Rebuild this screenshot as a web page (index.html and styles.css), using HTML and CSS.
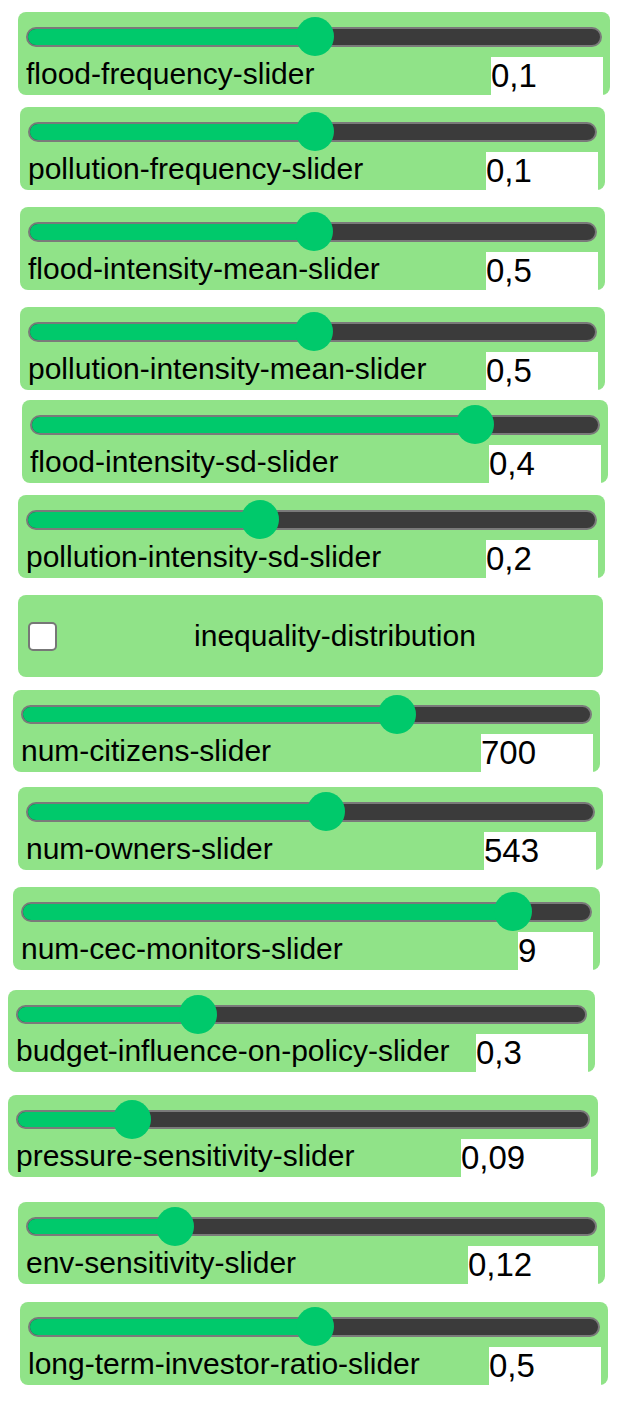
FILE: index.html
```html
<!doctype html>
<html lang="en">
<head>
    <meta charset="utf-8">
    <title>Model controls</title>
    <link rel="stylesheet" href="styles.css">
</head>
<body>
    <div class="controls">
        <div class="widget slider w-flood-frequency">
            <div class="track" style="--pos: 50.2%"><span class="fill"></span><span class="thumb"></span></div>
            <div class="row"><span class="label">flood-frequency-slider</span><span class="value">0,1</span></div>
        </div>

        <div class="widget slider w-pollution-frequency">
            <div class="track" style="--pos: 50.5%"><span class="fill"></span><span class="thumb"></span></div>
            <div class="row"><span class="label">pollution-frequency-slider</span><span class="value">0,1</span></div>
        </div>

        <div class="widget slider w-flood-mean">
            <div class="track" style="--pos: 50.3%"><span class="fill"></span><span class="thumb"></span></div>
            <div class="row"><span class="label">flood-intensity-mean-slider</span><span class="value">0,5</span></div>
        </div>

        <div class="widget slider w-pollution-mean">
            <div class="track" style="--pos: 50.3%"><span class="fill"></span><span class="thumb"></span></div>
            <div class="row"><span class="label">pollution-intensity-mean-slider</span><span class="value">0,5</span></div>
        </div>

        <div class="widget slider w-flood-sd">
            <div class="track" style="--pos: 78.2%"><span class="fill"></span><span class="thumb"></span></div>
            <div class="row"><span class="label">flood-intensity-sd-slider</span><span class="value">0,4</span></div>
        </div>

        <div class="widget slider w-pollution-sd">
            <div class="track" style="--pos: 41%"><span class="fill"></span><span class="thumb"></span></div>
            <div class="row"><span class="label">pollution-intensity-sd-slider</span><span class="value">0,2</span></div>
        </div>

        <label class="widget switch w-inequality">
            <span class="box"></span>
            <span class="label">inequality-distribution</span>
        </label>

        <div class="widget slider w-citizens">
            <div class="track" style="--pos: 66%"><span class="fill"></span><span class="thumb"></span></div>
            <div class="row"><span class="label">num-citizens-slider</span><span class="value">700</span></div>
        </div>

        <div class="widget slider w-owners">
            <div class="track" style="--pos: 52.7%"><span class="fill"></span><span class="thumb"></span></div>
            <div class="row"><span class="label">num-owners-slider</span><span class="value">543</span></div>
        </div>

        <div class="widget slider w-monitors">
            <div class="track" style="--pos: 86.5%"><span class="fill"></span><span class="thumb"></span></div>
            <div class="row"><span class="label">num-cec-monitors-slider</span><span class="value narrow">9</span></div>
        </div>

        <div class="widget slider w-budget">
            <div class="track" style="--pos: 31.7%"><span class="fill"></span><span class="thumb"></span></div>
            <div class="row"><span class="label">budget-influence-on-policy-slider</span><span class="value">0,3</span></div>
        </div>

        <div class="widget slider w-pressure">
            <div class="track" style="--pos: 20%"><span class="fill"></span><span class="thumb"></span></div>
            <div class="row"><span class="label">pressure-sensitivity-slider</span><span class="value wide">0,09</span></div>
        </div>

        <div class="widget slider w-env">
            <div class="track" style="--pos: 25.9%"><span class="fill"></span><span class="thumb"></span></div>
            <div class="row"><span class="label">env-sensitivity-slider</span><span class="value wide">0,12</span></div>
        </div>

        <div class="widget slider w-investors">
            <div class="track" style="--pos: 50.2%"><span class="fill"></span><span class="thumb"></span></div>
            <div class="row"><span class="label">long-term-investor-ratio-slider</span><span class="value">0,5</span></div>
        </div>
    </div>
</body>
</html>
```

FILE: styles.css
```css
body {
    margin: 0;
    background-color: #ffffff;
    font-family: 'Liberation Sans', Arial, sans-serif;
    color: #000000;
}

.controls {
    display: flex;
    flex-direction: column;
    align-items: flex-start;
}

.widget {
    box-sizing: border-box;
    background-color: #90e388;
    border-radius: 8px;
}

/* sliders */

.slider {
    display: flex;
    flex-direction: column;
    height: 83px;
    padding: 15px 7px 0 8px;
}

.track {
    position: relative;
    box-sizing: border-box;
    height: 20px;
    margin-right: 1px;
    border: 2px solid #7a7a7a;
    border-radius: 10px;
    background-color: #3b3b3b;
}

.track .fill {
    display: block;
    width: var(--pos);
    height: 100%;
    border-radius: 8px 0 0 8px;
    background-color: #00c96b;
}

.track .thumb {
    position: absolute;
    top: 50%;
    left: calc(var(--pos) - 19px);
    width: 38px;
    height: 39px;
    margin-top: -20px;
    border-radius: 50%;
    background-color: #00c96b;
}

.row {
    display: flex;
    height: 38px;
    margin-top: 10px;
}

.row .label {
    flex: 1;
    font-size: 30px;
    line-height: 34px;
    white-space: nowrap;
}

.value {
    width: 112px;
    background-color: #ffffff;
    font-size: 33px;
    line-height: 38px;
}

.value.wide {
    width: 130px;
}

.value.narrow {
    width: 75px;
}

/* switch */

.switch {
    display: flex;
    align-items: center;
    height: 82px;
    padding: 0 10px;
}

.switch .box {
    box-sizing: border-box;
    width: 29px;
    height: 29px;
    border: 2px solid #777777;
    border-radius: 5px;
    background-color: #ffffff;
}

.switch .label {
    flex: 1;
    margin-left: 20px;
    font-size: 30px;
    text-align: center;
}

/* placement of each widget */

.w-flood-frequency { margin: 12px 0 0 18px; width: 592px; }
.w-pollution-frequency { margin: 12px 0 0 20px; width: 585px; }
.w-flood-mean { margin: 17px 0 0 20px; width: 585px; }
.w-pollution-mean { margin: 17px 0 0 20px; width: 585px; }
.w-flood-sd { margin: 10px 0 0 22px; width: 586px; }
.w-pollution-sd { margin: 12px 0 0 18px; width: 587px; }
.w-inequality { margin: 17px 0 0 18px; width: 585px; }
.w-citizens { margin: 13px 0 0 13px; width: 587px; height: 82px; }
.w-owners { margin: 15px 0 0 18px; width: 585px; }
.w-monitors { margin: 17px 0 0 13px; width: 587px; }
.w-budget { margin: 20px 0 0 8px; width: 587px; height: 82px; }
.w-pressure { margin: 23px 0 0 8px; width: 590px; height: 82px; }
.w-env { margin: 25px 0 0 18px; width: 587px; height: 82px; }
.w-investors { margin: 18px 0 0 20px; width: 588px; }
```
